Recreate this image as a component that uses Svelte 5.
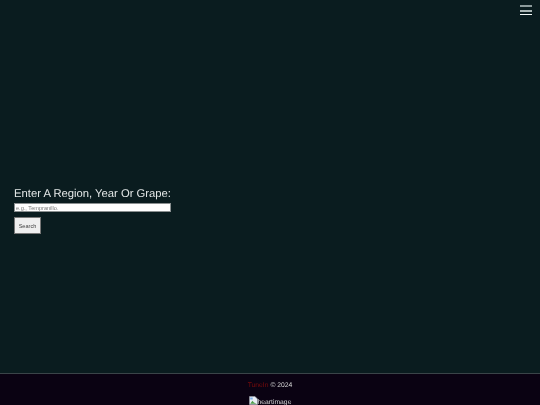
<script lang="ts">
  let query = $state('');
</script>

<div class="page">
  <header class="topbar">
    <button class="burger" aria-label="Menu">
      <span></span><span></span><span></span>
    </button>
  </header>

  <main class="content">
    <form class="search" onsubmit={(e) => e.preventDefault()}>
      <label for="q">Enter A Region, Year Or Grape:</label>
      <input id="q" type="text" placeholder="e.g., Tempranillo." bind:value={query} />
      <button class="submit" type="submit">Search</button>
    </form>
  </main>

  <footer class="foot">
    <p class="credit"><span class="brand">TuneIn</span> © 2024</p>
    <p class="heart">
      <svg class="broken" viewBox="0 0 9 9" width="9" height="9" aria-hidden="true">
        <path d="M.5.5h5.500l2.500 2.500v5.500h-8z" fill="#e8eef5" stroke="#9aa0a8" stroke-width=".6" />
        <path d="M1.200 7.800l2.200-3 1.500 1.600 2.800 1.400z" fill="#4f9e4a" />
        <path d="M1.200 1.500h2.500v2h-2.500z" fill="#7fb0e8" />
      </svg>heartimage
    </p>
  </footer>
</div>

<style>
  :global(body) {
    margin: 0;
    background: #0a1c1f;
  }
  .page {
    position: relative;
    height: 405px;
    overflow: hidden;
    display: flex;
    flex-direction: column;
    font-family: "Liberation Sans", Arial, sans-serif;
    color: #e6e6e6;
    text-rendering: geometricPrecision;
    will-change: transform;
  }
  .topbar {
    display: flex;
    justify-content: flex-end;
    padding: 5px 8px 0 0;
    height: 0;
  }
  .burger {
    width: 12px;
    height: 10px;
    padding: 0;
    border: 0;
    background: none;
    display: flex;
    flex-direction: column;
    justify-content: space-between;
    box-sizing: content-box;
  }
  .burger span {
    display: block;
    height: 1px;
    background: #f4f8f8;
  }
  .burger span:first-child {
    height: 2px;
    background: #8c9a9b;
  }
  .burger span:nth-child(2) {
    height: 2px;
    background: #a9b5b5;
  }
  .content {
    flex: 1;
    display: flex;
    align-items: center;
    padding: 0 14px;
  }
  .search {
    display: flex;
    flex-direction: column;
    align-items: flex-start;
    margin-top: 42px;
  }
  label {
    font-size: 11.25px;
    line-height: 16px;
    color: #e4e8e8;
    margin-bottom: 1px;
  }
  input {
    width: 157px;
    height: 9px;
    box-sizing: border-box;
    padding: 0 1px;
    margin: 0;
    border: 1px solid #8a8f90;
    background: #fff;
    font-family: inherit;
    font-size: 5.6px;
  }
  input::placeholder {
    color: #777;
  }
  .submit {
    margin-top: 5px;
    width: 27px;
    height: 17px;
    padding: 0;
    border: 1px solid #777;
    background: #efefef;
    color: #444;
    font-family: inherit;
    font-size: 5.6px;
  }
  .foot {
    height: 32px;
    box-sizing: border-box;
    border-top: 1px solid #3a4448;
    background: #0a0212;
    text-align: center;
    font-size: 6.75px;
    color: #d8d8d8;
  }
  .foot p {
    margin: 0;
  }
  .credit {
    padding-top: 7px;
    line-height: 10px;
  }
  .brand {
    color: #7a0c0c;
  }
  .heart {
    margin-top: 5px !important;
    line-height: 10px;
  }
  .broken {
    vertical-align: -1px;
  }
</style>
